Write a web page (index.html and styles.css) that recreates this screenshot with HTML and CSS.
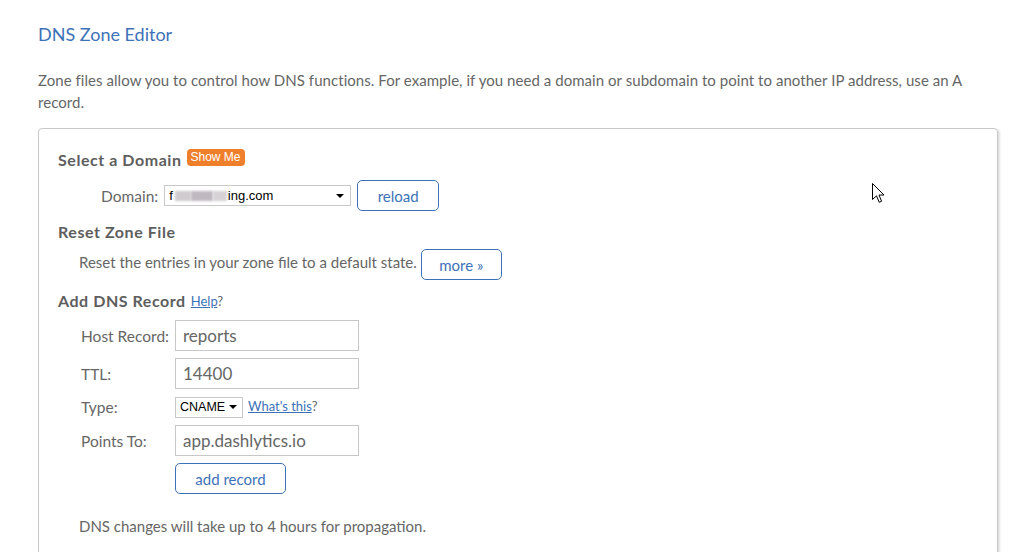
FILE: index.html
```html
<!DOCTYPE html>
<html>
<head>
<meta charset="utf-8">
<link rel="stylesheet" href="styles.css">
</head>
<body>
<div class="page">
  <h1 class="title">DNS Zone Editor</h1>
  <p class="intro">Zone files allow you to control how DNS functions. For example, if you need a domain or subdomain to point to another IP address, use an A record.</p>
  <div class="box">
    <div class="section-head">
      <h2 class="heading">Select a Domain</h2>
      <span class="badge">Show Me</span>
    </div>
    <div class="domain-row">
      <span class="label">Domain:</span>
      <div class="select domain-select">
        <span class="select-text">f<span class="blur b1"></span><span class="blur b2"></span><span class="blur b3"></span>ing.com</span>
        <span class="caret"></span>
      </div>
      <button class="btn reload">reload</button>
    </div>

    <h2 class="heading reset-head">Reset Zone File</h2>
    <div class="reset-row">
      <span class="text">Reset the entries in your zone file to a default state.</span>
      <button class="btn more">more »</button>
    </div>

    <div class="section-head add-head">
      <h2 class="heading">Add DNS Record</h2>
      <span class="help"><a class="link">Help</a>?</span>
    </div>

    <div class="form">
      <span class="flabel">Host Record:</span>
      <div class="input">reports</div>
      <span class="flabel">TTL:</span>
      <div class="input">14400</div>
      <span class="flabel">Type:</span>
      <div class="type-cell">
        <div class="select type-select"><span class="select-text">CNAME</span><span class="caret"></span></div>
        <span class="help"><a class="link">What's this</a>?</span>
      </div>
      <span class="flabel">Points To:</span>
      <div class="input">app.dashlytics.io</div>
      <span></span>
      <div><button class="btn add">add record</button></div>
    </div>

    <p class="note">DNS changes will take up to 4 hours for propagation.</p>
  </div>
  <svg class="cursor" width="13" height="21" viewBox="0 0 13 21">
    <path d="M0.5 0.5 L0.5 16.5 L4.5 12.8 L7.2 19.3 L9.6 18.3 L7 12 L12 12 Z" fill="#fff" stroke="#000" stroke-width="1" stroke-linejoin="miter"/>
  </svg>
</div>
</body>
</html>
```
FILE: styles.css
```css
* { box-sizing: border-box; }
html, body { margin: 0; padding: 0; background: #fff; }
body {
  font-family: "Lato", "Open Sans", sans-serif;
  color: #666;
  width: 1030px;
  height: 552px;
  overflow: hidden;
}
.page {
  position: relative;
  padding: 24px 32px 0 38px;
}
.title {
  margin: 0;
  font-size: 18px;
  font-weight: 400;
  color: #3d72b8;
  line-height: 20px;
}
.intro {
  margin: 25px 0 15px 0;
  font-size: 15px;
  line-height: 22px;
  color: #666;
  width: 940px;
  letter-spacing: 0.05px;
}
.box {
  width: 960px;
  height: 440px;
  border: 1px solid #c8c8c8;
  border-radius: 4px;
  box-shadow: 2px 1px 2px rgba(0,0,0,0.12);
  padding: 20px 19px 0 19px;
}
.section-head {
  display: flex;
  align-items: flex-end;
  gap: 5px;
}
.heading {
  margin: 0;
  font-size: 16px;
  font-weight: 700;
  color: #5e5e5e;
  line-height: 22px;
  letter-spacing: 0.55px;
}
.badge {
  background: #f07f2c;
  color: #fff;
  font-family: "Liberation Sans", Arial, sans-serif;
  font-size: 12px;
  line-height: 17px;
  padding: 0 4px;
  border-radius: 4px;
  margin-bottom: 5px;
}
.domain-row {
  display: flex;
  align-items: center;
  gap: 6px;
  margin: 9px 0 0 43px;
}
.label { font-size: 15.5px; }
.select {
  display: flex;
  align-items: center;
  justify-content: space-between;
  border: 1px solid #c9c9c9;
  background: #fff;
  height: 21px;
  padding: 0 6px 0 4px;
  font-family: "Liberation Sans", Arial, sans-serif;
  font-size: 13px;
  color: #000;
}
.domain-select { width: 187px; }
.select-text { display: flex; align-items: center; }
.blur {
  display: inline-block;
  height: 10px;
  background: #c6c0c6;
  filter: blur(1px);
}
.b1 { width: 16px; background: #cfcbcf; margin-left: 2px; }
.b2 { width: 22px; background: #bfb8c0; }
.b3 { width: 14px; background: #d6d2d6; margin-right: 1px; }
.caret {
  width: 0; height: 0;
  border-left: 4px solid transparent;
  border-right: 4px solid transparent;
  border-top: 4px solid #000;
}
.btn {
  font-family: "Lato", "Open Sans", sans-serif;
  font-size: 15px;
  color: #3d72b8;
  background: #fff;
  border: 1px solid #3d72b8;
  border-radius: 5px;
  height: 31px;
  padding: 0;
}
.reload { width: 82px; }
.reset-head { margin-top: 10px; }
.reset-row {
  display: flex;
  align-items: center;
  gap: 4px;
  margin: 6px 0 0 21px;
}
.reset-row .text { font-size: 15px; line-height: 22px; margin-bottom: 5px; }
.more { width: 81px; }
.add-head { margin-top: 10px; }
.help { font-size: 13px; color: #666; margin-bottom: 3px; font-weight: 400; }
.link { color: #3d72b8; text-decoration: underline; }
.form {
  display: grid;
  grid-template-columns: 94px 184px;
  row-gap: 7px;
  margin: 8px 0 0 23px;
  align-items: center;
}
.flabel { font-size: 15.5px; color: #666; }
.input {
  height: 31px;
  border: 1px solid #c7c7c7;
  font-size: 17px;
  line-height: 29px;
  padding: 0 7px;
  color: #666;
}
.type-cell {
  display: flex;
  align-items: center;
  gap: 5px;
  height: 22px;
  width: 300px;
}
.type-select { width: 68px; height: 21px; padding: 0 5px 0 4px; font-size: 12.5px; }
.add { width: 111px; }
.note {
  margin: 21px 0 0 21px;
  font-size: 15px;
  line-height: 22px;
}
.cursor {
  position: absolute;
  left: 872px;
  top: 183px;
}
```
